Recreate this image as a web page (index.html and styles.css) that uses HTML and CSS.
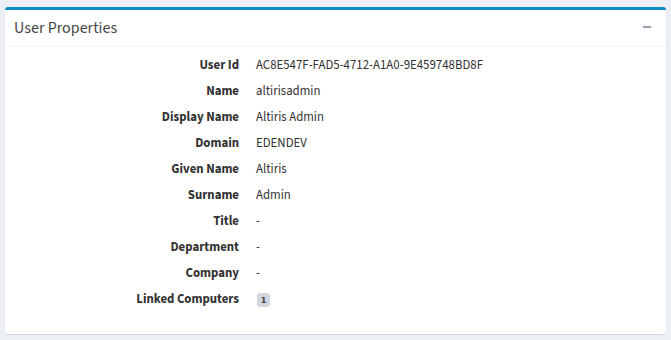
FILE: index.html
```html
<!DOCTYPE html>
<html lang="en">
<head>
<meta charset="UTF-8" />
<title>User Properties</title>
<link rel="stylesheet" href="styles.css">
</head>
<body>
  <div class="box">
    <div class="box-header">
      <h3 class="box-title">User Properties</h3>
      <button class="btn-collapse" title="Collapse"><span class="minus"></span></button>
    </div>
    <div class="box-body">
      <dl class="props">
        <dt>User Id</dt><dd>AC8E547F-FAD5-4712-A1A0-9E459748BD8F</dd>
        <dt>Name</dt><dd>altirisadmin</dd>
        <dt>Display Name</dt><dd>Altiris Admin</dd>
        <dt>Domain</dt><dd>EDENDEV</dd>
        <dt>Given Name</dt><dd>Altiris</dd>
        <dt>Surname</dt><dd>Admin</dd>
        <dt>Title</dt><dd>-</dd>
        <dt>Department</dt><dd>-</dd>
        <dt>Company</dt><dd>-</dd>
        <dt>Linked Computers</dt><dd><span class="badge">1</span></dd>
      </dl>
    </div>
  </div>
</body>
</html>
```

FILE: styles.css
```css
body {
  margin: 0;
  padding: 7px 5px;
  background-color: #ecf0f5;
  color: #333;
  font-family: 'Source Sans 3', 'Source Sans Pro', 'Lato', sans-serif;
  font-size: 12.8px;
}
.box {
  background: #fff;
  border-top: 3px solid #0a8bbd;
  border-radius: 3px;
  box-shadow: 0 1px 1px rgba(0, 0, 0, 0.1);
  height: 327px;
  box-sizing: border-box;
}
.box-header {
  display: flex;
  align-items: center;
  justify-content: space-between;
  height: 36px;
  padding: 0 9px;
  border-bottom: 1px solid #f4f4f4;
}
.box-title {
  margin: 0;
  font-size: 16px;
  font-weight: 400;
  color: #444;
}
.btn-collapse {
  background: none;
  border: none;
  padding: 6px 6px 8px;
  cursor: pointer;
}
.minus {
  display: block;
  width: 8px;
  height: 2px;
  background: #97a0b3;
}
.box-body {
  padding: 5px 0 0;
}
.props {
  display: grid;
  grid-template-columns: 234px 1fr;
  column-gap: 17px;
  row-gap: 0;
  margin: 0;
}
.props dt {
  font-weight: 700;
  text-align: right;
  line-height: 26px;
}
.props dd {
  margin: 0;
  line-height: 26px;
}
.badge {
  display: inline-block;
  background: #d2d6de;
  color: #444;
  font-size: 10px;
  font-weight: 700;
  line-height: 10px;
  padding: 2px 4px;
  border-radius: 3px;
  vertical-align: middle;
  margin-left: 1px;
}
```
